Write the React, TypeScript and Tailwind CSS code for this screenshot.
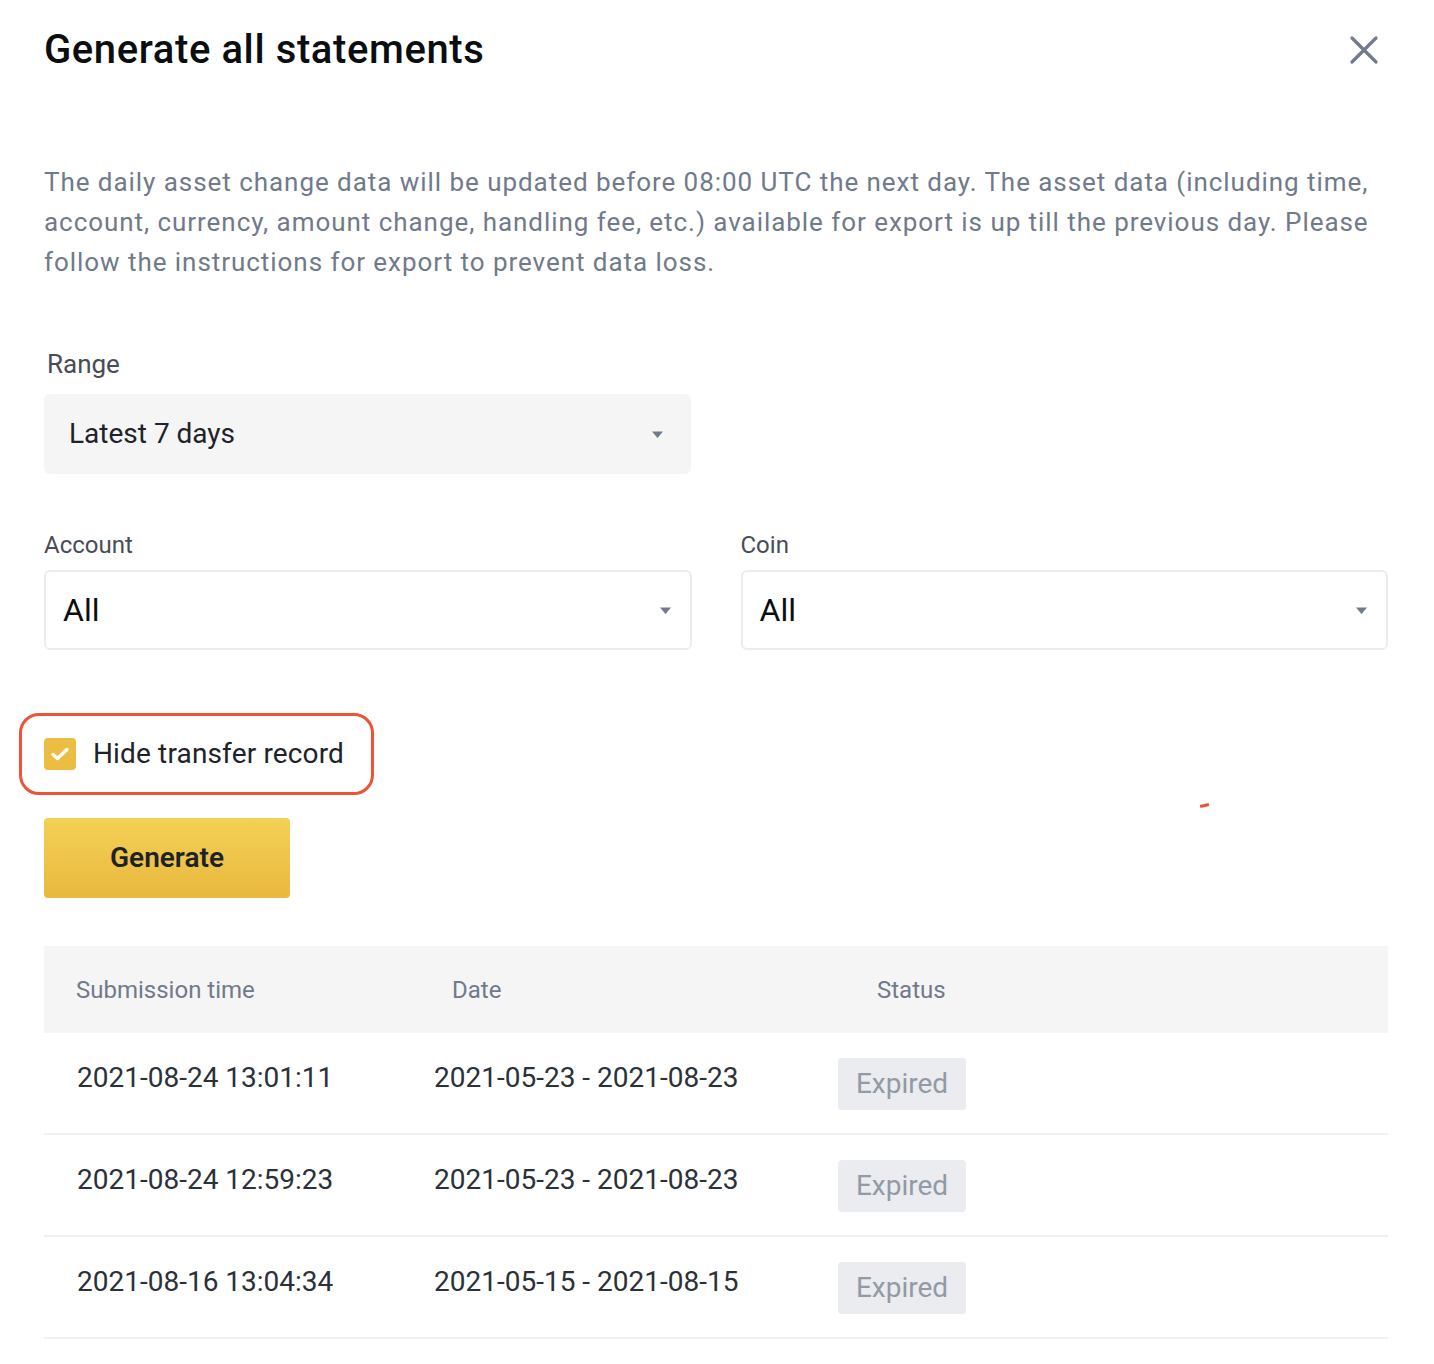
import React from 'react';

const rows = [
  { time: '2021-08-24 13:01:11', range: '2021-05-23 - 2021-08-23' },
  { time: '2021-08-24 12:59:23', range: '2021-05-23 - 2021-08-23' },
  { time: '2021-08-16 13:04:34', range: '2021-05-15 - 2021-08-15' },
];

function Caret() {
  return (
    <svg width="13" height="9" viewBox="0 0 13 9" className="shrink-0">
      <path d="M1 1.5h11L6.5 8z" fill="#707a8a" />
    </svg>
  );
}

function Select({ value, filled, big }: { value: string; filled?: boolean; big?: boolean }) {
  return (
    <div
      className={
        filled
          ? 'flex h-[80px] items-center justify-between rounded-[6px] bg-[#f5f5f5] pl-[25px] pr-[27px]'
          : 'flex h-[80px] items-center justify-between rounded-[6px] border-2 border-[#eaecef] pl-[17px] pr-[18px]'
      }
    >
      <span className={big ? 'text-[32px] text-[#0b0e11]' : 'text-[28px] text-[#1e2329]'}>{value}</span>
      <Caret />
    </div>
  );
}

export default function App() {
  return (
    <div
      className="relative min-h-[1364px] w-[1434px] bg-white pl-[44px] pr-[46px] pt-[28px]"
      style={{ fontFamily: 'Roboto, "Noto Sans", sans-serif' }}
    >
      <div className="flex h-[44px] items-center justify-between">
        <h1 className="text-[40px] font-medium leading-[44px] tracking-[0.6px] text-[#0b0e11]">Generate all statements</h1>
        <svg width="30" height="30" viewBox="0 0 30 30" className="mr-[9px]">
          <path d="M3 3l24 24M27 3L3 27" stroke="#707a8a" strokeWidth="3.2" strokeLinecap="round" />
        </svg>
      </div>

      <p className="mt-[90px] whitespace-nowrap text-[26px] leading-[40px] tracking-[0.95px] text-[#707a8a]">
        The daily asset change data will be updated before 08:00 UTC the next day. The asset data (including time,
        <br />
        account, currency, amount change, handling fee, etc.) available for export is up till the previous day. Please
        <br />
        follow the instructions for export to prevent data loss.
      </p>

      <div className="mt-[66px] w-[647px]">
        <div className="pl-[3px] text-[26px] leading-[32px] text-[#474d57]">Range</div>
        <div className="mt-[14px]">
          <Select value="Latest 7 days" filled />
        </div>
      </div>

      <div className="mt-[56px] grid grid-cols-2 gap-x-[49px]">
        <div>
          <div className="text-[24px] leading-[30px] text-[#474d57]">Account</div>
          <div className="mt-[10px]">
            <Select value="All" big />
          </div>
        </div>
        <div>
          <div className="text-[24px] leading-[30px] text-[#474d57]">Coin</div>
          <div className="mt-[10px]">
            <Select value="All" big />
          </div>
        </div>
      </div>

      <div className="relative mt-[63px] flex h-[82px] items-center gap-[17px]">
        <div className="flex h-[32px] w-[32px] items-center justify-center rounded-[4px] bg-[#ebbd42]">
          <svg width="20" height="16" viewBox="0 0 20 16">
            <path d="M3 8.5l4.5 4L17 3.5" stroke="white" strokeWidth="3.4" fill="none" strokeLinecap="round" strokeLinejoin="round" />
          </svg>
        </div>
        <span className="text-[28px] tracking-[0.15px] text-[#1e2329]">Hide transfer record</span>
        <div className="pointer-events-none absolute left-[-25px] top-0 h-[82px] w-[355px] rounded-[20px] border-[3px] border-[#ee5335]" />
      </div>

      <div className="absolute left-[1200px] top-[804px] h-[3px] w-[9px] -rotate-12 bg-[#ee5335]" />

      <button className="mt-[23px] h-[80px] w-[246px] rounded-[4px] bg-gradient-to-b from-[#f3d155] to-[#e9b83e] text-[28px] font-semibold text-[#1e2329]">
        Generate
      </button>

      <div className="mt-[48px]">
        <div className="flex h-[87px] items-center bg-[#f5f5f5] text-[24px] text-[#707a8a]">
          <div className="w-[408px] pl-[32px]">Submission time</div>
          <div className="w-[425px]">Date</div>
          <div>Status</div>
        </div>
        {rows.map((r, i) => (
          <div key={i} className="flex h-[102px] items-start border-b-2 border-[#f0f1f2] text-[28px] text-[#2b3139]">
            <div className="mt-[27px] w-[390px] pl-[33px] leading-[36px]">{r.time}</div>
            <div className="mt-[27px] w-[404px] leading-[36px]">{r.range}</div>
            <div className="mt-[25px] flex h-[52px] w-[128px] items-center justify-center rounded-[4px] bg-[#eaecef] text-[#929aa5]">
              Expired
            </div>
          </div>
        ))}
      </div>
    </div>
  );
}
